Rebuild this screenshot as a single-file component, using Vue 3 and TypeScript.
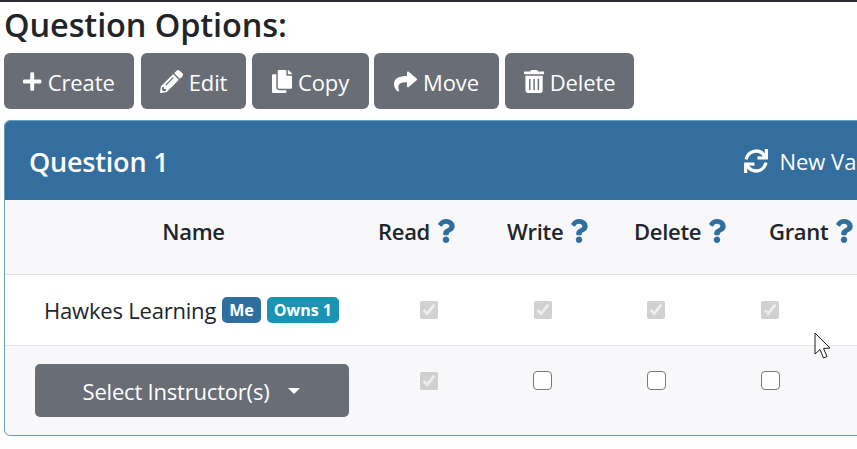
<template>
  <div class="page">
    <h1 class="title">Question Options:</h1>

    <div class="toolbar">
      <button v-for="a in actions" :key="a.label" class="btn" :class="a.cls">
        <svg class="btn-icon" :viewBox="a.box"><path :d="a.d" /></svg>
        <span>{{ a.label }}</span>
      </button>
    </div>

    <div class="card">
      <div class="card-head">
        <span class="card-title">Question 1</span>
        <span class="new-version">
          <svg class="sync" viewBox="0 0 512 512"><path :d="syncPath" /></svg>
          New Variation
        </span>
      </div>

      <div class="head-row">
        <div class="head-name">Name</div>
        <div v-for="h in permHeaders" :key="h" class="head-cell">
          {{ h }}
          <svg class="help" viewBox="0 0 384 512"><path :d="helpPath" /></svg>
        </div>
      </div>

      <div class="row owner-row">
        <div class="name-cell">
          Hawkes Learning
          <span class="badge me">Me</span>
          <span class="badge owns">Owns 1</span>
        </div>
        <div v-for="h in permHeaders" :key="h" class="check-cell">
          <input type="checkbox" checked disabled />
        </div>
      </div>

      <div class="row select-row">
        <div class="name-cell">
          <button class="select-btn">Select Instructor(s)<i class="caret"></i></button>
        </div>
        <div v-for="(h, i) in permHeaders" :key="h" class="check-cell">
          <input type="checkbox" :checked="i === 0" :disabled="i === 0" />
        </div>
      </div>
    </div>

    <svg class="cursor" viewBox="0 0 20 30" width="20" height="30">
      <path d="M1 1 L1 22 L6 17.5 L9.5 26 L13 24.5 L9.5 16.5 L16 16 Z" />
    </svg>
  </div>
</template>

<script setup lang="ts">
interface Action {
  label: string
  cls: string
  box: string
  d: string
}

const actions: Action[] = [
  {
    label: 'Create',
    cls: 'create',
    box: '0 0 448 512',
    d: 'M416 208H272V64c0-17.67-14.33-32-32-32h-32c-17.67 0-32 14.33-32 32v144H32c-17.67 0-32 14.33-32 32v32c0 17.67 14.33 32 32 32h144v144c0 17.67 14.33 32 32 32h32c17.67 0 32-14.33 32-32V304h144c17.67 0 32-14.33 32-32v-32c0-17.67-14.33-32-32-32z'
  },
  {
    label: 'Edit',
    cls: 'edit',
    box: '0 0 512 512',
    d: 'M497.9 142.1l-46.1 46.1c-4.7 4.7-12.3 4.7-17 0l-111-111c-4.7-4.7-4.7-12.3 0-17l46.1-46.1c18.7-18.7 49.1-18.7 67.9 0l60.1 60.1c18.8 18.7 18.8 49.1 0 67.9zM284.2 99.8L21.6 362.4.4 483.9c-2.9 16.4 11.4 30.6 27.8 27.8l121.5-21.3 262.6-262.6c4.7-4.7 4.7-12.3 0-17l-111-111c-4.8-4.7-12.4-4.7-17.1 0zM124.1 339.9c-5.5-5.5-5.5-14.3 0-19.8l154-154c5.5-5.5 14.3-5.5 19.8 0s5.5 14.3 0 19.8l-154 154c-5.5 5.5-14.3 5.5-19.8 0zM88 424h48v36.3l-64.5 11.3-31.1-31.1L51.7 376H88v48z'
  },
  {
    label: 'Copy',
    cls: 'copy',
    box: '0 0 448 512',
    d: 'M320 448v40c0 13.255-10.745 24-24 24H24c-13.255 0-24-10.745-24-24V120c0-13.255 10.745-24 24-24h72v296c0 30.879 25.121 56 56 56h168zm0-344V0H152c-13.255 0-24 10.745-24 24v368c0 13.255 10.745 24 24 24h272c13.255 0 24-10.745 24-24V128H344c-13.2 0-24-10.8-24-24zm120.971-31.029L375.029 7.029A24 24 0 0 0 358.059 0H352v96h96v-6.059a24 24 0 0 0-7.029-16.97z'
  },
  {
    label: 'Move',
    cls: 'move',
    box: '0 0 512 512',
    d: 'M503.691 189.836L327.687 37.851C312.281 24.546 288 35.347 288 56.015v80.053C127.371 137.907 0 170.1 0 322.326c0 61.441 39.581 122.309 83.333 154.132 13.653 9.931 33.111-2.533 28.077-18.631C66.066 312.814 132.917 274.316 288 272.085V360c0 20.7 24.3 31.453 39.687 18.164l176.004-152c11.071-9.562 11.086-26.753 0-36.328z'
  },
  {
    label: 'Delete',
    cls: 'del',
    box: '0 0 448 512',
    d: 'M32 464a48 48 0 0 0 48 48h288a48 48 0 0 0 48-48V128H32zm272-256a16 16 0 0 1 32 0v224a16 16 0 0 1-32 0zm-96 0a16 16 0 0 1 32 0v224a16 16 0 0 1-32 0zm-96 0a16 16 0 0 1 32 0v224a16 16 0 0 1-32 0zM432 32H312l-9.4-18.7A24 24 0 0 0 281.1 0H166.8a23.72 23.72 0 0 0-21.4 13.3L136 32H16A16 16 0 0 0 0 48v32a16 16 0 0 0 16 16h416a16 16 0 0 0 16-16V48a16 16 0 0 0-16-16z'
  }
]

const syncPath =
  'M440.65 12.57l4 82.77A247.16 247.16 0 0 0 255.83 8C134.73 8 33.91 94.92 12.29 209.82A12 12 0 0 0 24.09 224h49.05a12 12 0 0 0 11.67-9.26 175.91 175.91 0 0 1 317-56.94l-101.46-4.86a12 12 0 0 0-12.57 12v47.41a12 12 0 0 0 12 12H500a12 12 0 0 0 12-12V12a12 12 0 0 0-12-12h-47.37a12 12 0 0 0-11.98 12.57zM255.83 432a175.61 175.61 0 0 1-146-77.8l101.8 4.87a12 12 0 0 0 12.57-12v-47.4a12 12 0 0 0-12-12H12a12 12 0 0 0-12 12V500a12 12 0 0 0 12 12h47.35a12 12 0 0 0 12-12.6l-4.15-82.57A247.17 247.17 0 0 0 255.83 504c121.11 0 221.93-86.92 243.55-201.82a12 12 0 0 0-11.8-14.18h-49.05a12 12 0 0 0-11.67 9.26A175.86 175.86 0 0 1 255.83 432z'

const helpPath =
  'M202.021 0C122.202 0 70.503 32.703 29.914 91.026c-7.363 10.58-5.093 25.086 5.178 32.874l43.138 32.709c10.373 7.865 25.132 6.026 33.253-4.148 25.049-31.381 43.63-49.449 82.757-49.449 30.764 0 68.816 19.799 68.816 49.631 0 22.552-18.617 34.134-48.993 51.164-35.423 19.86-82.299 44.576-82.299 106.405V320c0 13.255 10.745 24 24 24h72.471c13.255 0 24-10.745 24-24v-5.773c0-42.86 125.268-44.645 125.268-160.627C377.504 66.256 286.902 0 202.021 0zM192 373.459c-38.196 0-69.271 31.075-69.271 69.271 0 38.195 31.075 69.27 69.271 69.27s69.271-31.075 69.271-69.271-31.075-69.27-69.271-69.27z'

const permHeaders = ['Read', 'Write', 'Delete', 'Grant']
</script>

<style>
html,
body {
  margin: 0;
  background: #fff;
  overflow: hidden;
}
</style>

<style scoped>
.page {
  position: relative;
  width: 857px;
  height: 449px;
  overflow: hidden;
  box-sizing: border-box;
  border-top: 2px solid #2b2d36;
  padding-left: 4px;
  font-family: "Open Sans", "Noto Sans", sans-serif;
  color: #212529;
}

.title {
  margin: 0;
  height: 51px;
  line-height: 45px;
  font-size: 32.5px;
  font-weight: 600;
  letter-spacing: -0.1px;
  white-space: nowrap;
}

.toolbar {
  display: flex;
  gap: 6px;
}

.btn {
  display: flex;
  align-items: center;
  justify-content: center;
  gap: 6px;
  height: 56px;
  padding: 1px 0 0;
  border: 0;
  border-radius: 6px;
  background: #686d76;
  color: #fff;
  font: inherit;
  font-size: 22px;
  letter-spacing: -0.1px;
}

.btn.create { width: 130px; margin-right: 1px; }
.btn.edit { width: 105px; }
.btn.copy { width: 117px; margin-right: -1px; }
.btn.move { width: 125px; }
.btn.del { width: 129px; }

.btn-icon {
  height: 23px;
  fill: #fff;
  flex: none;
}

.btn.create .btn-icon { height: 21px; }

.card {
  width: 960px;
  height: 316px;
  margin-top: 11px;
  box-sizing: border-box;
  border: 1.5px solid #6a9cbc;
  border-radius: 6px;
  overflow: hidden;
  background: #f8f8fa;
}

.card-head {
  display: flex;
  align-items: center;
  height: 79px;
  padding-left: 24px;
  background: #336e9e;
  color: #fff;
}

.card-title {
  padding-top: 2px;
  font-size: 27px;
  font-weight: 600;
  letter-spacing: -0.2px;
}

.new-version {
  display: flex;
  align-items: center;
  gap: 11px;
  margin-left: 576px;
  font-size: 22px;
  white-space: nowrap;
}

.sync {
  width: 24px;
  height: 24px;
  fill: #fff;
}

.head-row {
  display: grid;
  grid-template-columns: 373px 129px 127px 135px 130px;
  align-items: center;
  height: 75px;
  padding-bottom: 12px;
  box-sizing: border-box;
  border-bottom: 1.5px solid #dfe1e3;
  font-size: 22px;
  font-weight: 600;
  letter-spacing: -0.3px;
}

.head-name {
  padding-left: 4px;
  text-align: center;
}

.head-cell {
  display: flex;
  align-items: center;
  gap: 7px;
  white-space: nowrap;
}

.help {
  height: 24px;
  fill: #2f6f9f;
  flex: none;
}

.row {
  display: grid;
  grid-template-columns: 367px 114px 113px 114px 114px;
}

.owner-row {
  height: 71px;
  background: #fff;
  border-bottom: 1.5px solid #e3e4e6;
  box-sizing: border-box;
}

.select-row {
  height: 87px;
}

.name-cell {
  display: flex;
  align-items: center;
  gap: 6px;
  font-size: 22px;
  letter-spacing: -0.2px;
  padding-left: 39px;
  white-space: nowrap;
}

.select-row .name-cell {
  align-items: flex-start;
  padding-left: 29.5px;
  padding-top: 18px;
}

.badge {
  display: inline-flex;
  align-items: center;
  height: 26px;
  padding: 0 7px;
  border-radius: 5px;
  color: #fff;
  font-size: 16px;
  font-weight: 700;
  letter-spacing: 0;
}

.badge.me { background: #2f6f9f; }
.badge.owns { background: #1b94b3; }

.select-btn {
  display: flex;
  align-items: center;
  justify-content: center;
  width: 314px;
  height: 53px;
  padding: 0;
  border: 0;
  border-radius: 5px;
  background: #686d76;
  color: #fff;
  font: inherit;
  font-size: 22px;
  letter-spacing: -0.2px;
}

.caret {
  margin-left: 19px;
  border-top: 6.5px solid #fff;
  border-left: 6.5px solid transparent;
  border-right: 6.5px solid transparent;
}

.check-cell {
  display: flex;
  justify-content: center;
  padding-top: 26px;
  box-sizing: border-box;
}

.check-cell input {
  width: 18px;
  height: 18px;
  margin: 0;
}

.check-cell input:not(:disabled) {
  appearance: none;
  box-sizing: border-box;
  width: 19px;
  height: 19px;
  margin-top: -1px;
  background: #fff;
  border: 1.5px solid #7a7a7a;
  border-radius: 4px;
}

.cursor {
  position: absolute;
  left: 814px;
  top: 330px;
  fill: #fff;
  stroke: #1c1c1c;
  stroke-width: 1;
}
</style>
